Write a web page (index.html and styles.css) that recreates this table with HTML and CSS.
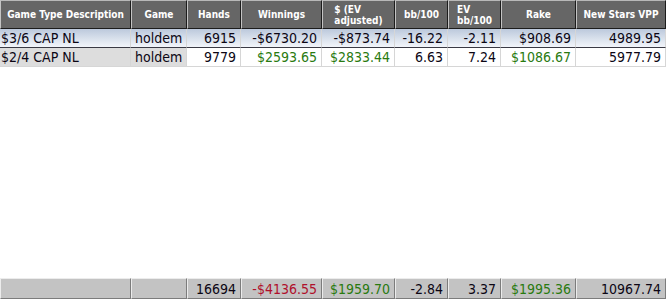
FILE: index.html
```html
<!DOCTYPE html>
<html>
<head>
<meta charset="utf-8">
<link rel="stylesheet" href="styles.css">
</head>
<body>
<div class="view">
  <table class="grid">
    <colgroup>
      <col class="c1"><col class="c2"><col class="c3"><col class="c4"><col class="c5"><col class="c6"><col class="c7"><col class="c8"><col class="c9">
    </colgroup>
    <thead>
      <tr>
        <th>Game Type Description</th>
        <th>Game</th>
        <th>Hands</th>
        <th>Winnings</th>
        <th><span class="wrap">$ (EV<br>adjusted)</span></th>
        <th>bb/100</th>
        <th><span class="wrap">EV<br>bb/100</span></th>
        <th>Rake</th>
        <th>New Stars VPP</th>
      </tr>
    </thead>
    <tbody>
      <tr class="sel">
        <td class="txt">$3/6 CAP NL</td>
        <td class="txt game">holdem</td>
        <td>6915</td>
        <td>-$6730.20</td>
        <td>-$873.74</td>
        <td>-16.22</td>
        <td>-2.11</td>
        <td>$908.69</td>
        <td>4989.95</td>
      </tr>
      <tr>
        <td class="txt key">$2/4 CAP NL</td>
        <td class="txt game key">holdem</td>
        <td>9779</td>
        <td class="pos">$2593.65</td>
        <td class="pos">$2833.44</td>
        <td>6.63</td>
        <td>7.24</td>
        <td class="pos">$1086.67</td>
        <td>5977.79</td>
      </tr>
    </tbody>
  </table>
  <table class="totals">
    <colgroup>
      <col class="c1"><col class="c2"><col class="c3"><col class="c4"><col class="c5"><col class="c6"><col class="c7"><col class="c8"><col class="c9">
    </colgroup>
    <tr>
      <td></td>
      <td></td>
      <td>16694</td>
      <td class="neg">-$4136.55</td>
      <td class="pos">$1959.70</td>
      <td>-2.84</td>
      <td>3.37</td>
      <td class="pos">$1995.36</td>
      <td>10967.74</td>
    </tr>
  </table>
</div>
</body>
</html>
```
FILE: styles.css
```css
html, body {
  margin: 0;
  padding: 0;
  background: #ffffff;
}

.view {
  width: 667px;
  height: 299px;
  display: flex;
  flex-direction: column;
  justify-content: space-between;
}

table {
  border-collapse: separate;
  border-spacing: 0;
  table-layout: fixed;
  width: 666px;
  font-family: "DejaVu Sans Condensed", "DejaVu Sans", sans-serif;
  font-stretch: condensed;
  font-size: 14px;
  color: #0c0614;
}

col.c1 { width: 131px; }
col.c2 { width: 56px; }
col.c3 { width: 54px; }
col.c4 { width: 81px; }
col.c5 { width: 73px; }
col.c6 { width: 53px; }
col.c7 { width: 53px; }
col.c8 { width: 75px; }
col.c9 { width: 90px; }

.grid th {
  box-sizing: border-box;
  height: 29px;
  padding: 0 2px;
  background: #666666;
  color: #ffffff;
  font-weight: bold;
  font-size: 10px;
  line-height: 11px;
  text-align: center;
  vertical-align: middle;
  white-space: nowrap;
  border-top: 1px solid #b8b8b8;
  border-left: 1px solid #c4c4c4;
  border-right: 1px solid #1c1c1c;
  border-bottom: 1px solid #1c1c1c;
}

.grid th .wrap {
  display: inline-block;
  text-align: left;
}

.grid td {
  box-sizing: border-box;
  height: 19px;
  padding: 0 4px 0 2px;
  text-align: right;
  white-space: nowrap;
  vertical-align: middle;
  line-height: 16px;
  border-right: 1px solid #d6d6d6;
  border-bottom: 1px solid #d6d6d6;
}

.grid td.txt {
  text-align: left;
  padding-left: 1px;
}

.grid td.game {
  padding-left: 4px;
}

.grid td.key {
  background: #dddddd;
}

.grid tr.sel td {
  background: linear-gradient(#bcc9dc, #f2f5fa);
  border-bottom: 1px solid #3a3a44;
}

.pos { color: #2a7a10; }
.neg { color: #b0102c; }

.totals td {
  box-sizing: border-box;
  height: 21px;
  padding: 0 4px 0 2px;
  background: #c3c3c3;
  text-align: right;
  white-space: nowrap;
  vertical-align: middle;
  line-height: 16px;
  border-top: 1px solid #ececec;
  border-left: 1px solid #ececec;
  border-right: 1px solid #7c7c7c;
  border-bottom: 1px solid #7c7c7c;
}
```
